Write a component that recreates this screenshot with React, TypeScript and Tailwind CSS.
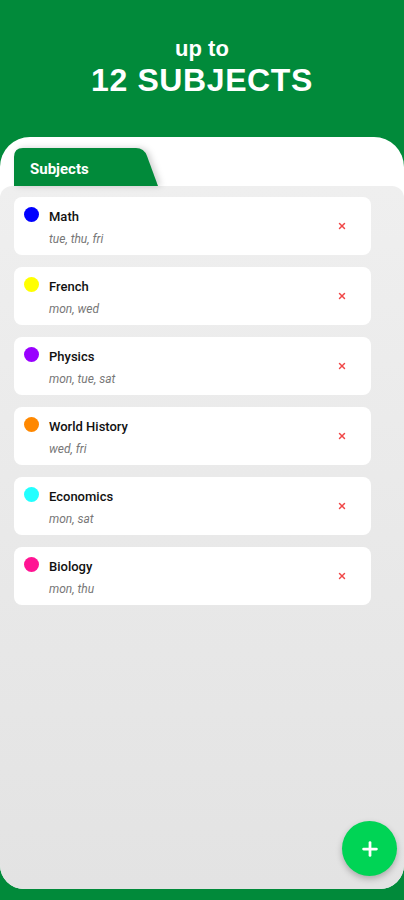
import { Plus, X } from "lucide-react"

interface Subject {
  name: string
  days: string
  color: string
}

const subjects: Subject[] = [
  { name: "Math", days: "tue, thu, fri", color: "#0000ff" },
  { name: "French", days: "mon, wed", color: "#ffff00" },
  { name: "Physics", days: "mon, tue, sat", color: "#9900ff" },
  { name: "World History", days: "wed, fri", color: "#ff8800" },
  { name: "Economics", days: "mon, sat", color: "#22ffff" },
  { name: "Biology", days: "mon, thu", color: "#ff1493" },
]

export default function App() {
  return (
    <div className="w-[404px] h-[900px] bg-[#018a3a] flex flex-col overflow-hidden" style={{ fontFamily: "Roboto, 'Liberation Sans', sans-serif" }}>
      {/* Header */}
      <header className="h-[137px] flex flex-col items-center pt-[36px] text-white font-bold" style={{ fontFamily: "'Liberation Sans', Arial, sans-serif" }}>
        <div className="text-[22px] leading-[26px]">up to</div>
        <div className="text-[32px] leading-[38px] -mt-[1px] tracking-[0.6px]">12 SUBJECTS</div>
      </header>

      {/* Main card */}
      <main className="relative h-[752px] bg-white rounded-t-[30px] rounded-b-[24px] flex flex-col">
        <div className="pl-[14px] pt-[11px]">
          <div className="relative w-[144px] h-[38px]">
            <svg className="absolute inset-0" width="144" height="38" viewBox="0 0 144 38" style={{ filter: "drop-shadow(3px 0px 3px rgba(0,0,0,0.18))" }}>
              <path d="M0 38 V9 Q0 0 9 0 H122 Q130 0 133 8 L144 38 Z" fill="#018a3a" />
            </svg>
            <span className="relative flex items-center h-full pt-[4px] pl-[16px] text-white font-bold text-[15px]">Subjects</span>
          </div>
        </div>

        <section className="flex-1 rounded-t-[12px] rounded-b-[24px] bg-gradient-to-b from-[#efefef] to-[#e3e3e3] pt-[11px] pl-[14px] pr-[33px] flex flex-col gap-[12px]">
          {subjects.map((s) => (
            <div key={s.name} className="h-[58px] bg-white rounded-[8px] flex items-center pl-[10px] pr-[24px]">
              <div className="self-start mt-[10px] w-[15px] h-[15px] rounded-full" style={{ backgroundColor: s.color }} />
              <div className="flex-1 ml-[10px] flex flex-col pt-[2px]">
                <span className="text-[13px] font-medium text-[#111] leading-[16px]">{s.name}</span>
                <span className="text-[12px] italic text-[#777] leading-[14px] mt-[7px]">{s.days}</span>
              </div>
              <X className="w-[10px] h-[10px] text-[#f04848]" strokeWidth={3.5} />
            </div>
          ))}
        </section>

        {/* Floating action button */}
        <button className="absolute right-[7px] bottom-[13px] w-[55px] h-[55px] rounded-full bg-[#00d455] flex items-center justify-center shadow-[0_3px_6px_rgba(0,0,0,0.25)]">
          <Plus className="w-[22px] h-[22px] text-white" strokeWidth={3} />
        </button>
      </main>
    </div>
  )
}
